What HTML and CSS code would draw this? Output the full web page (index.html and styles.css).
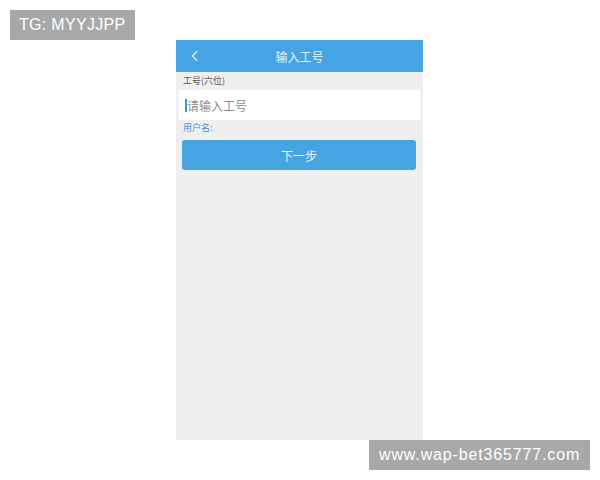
FILE: index.html
```html
<!DOCTYPE html>
<html>
<head>
<meta charset="utf-8">
<link rel="stylesheet" href="styles.css">
</head>
<body>
<div class="stage">
  <div class="tag">TG: MYYJJPP</div>
  <div class="phone">
    <div class="header">
      <svg class="back" width="8" height="12" viewBox="0 0 8 12"><path d="M6 1 L1.5 6 L6 11" fill="none" stroke="#d8ecfa" stroke-width="1.4"/></svg>
      <div class="title">输入工号</div>
    </div>
    <div class="label">工号(六位)</div>
    <div class="input"><span class="caret"></span><span class="ph">请输入工号</span></div>
    <div class="label user">用户名:</div>
    <div class="btn">下一步</div>
  </div>
  <div class="wm">www.wap-bet365777.com</div>
</div>
</body>
</html>
```

FILE: styles.css
```css
html, body { margin: 0; padding: 0; background: #fff; }
body { font-family: "Liberation Sans", "Noto Sans CJK SC", sans-serif; width: 600px; height: 480px; overflow: hidden; }
.stage { position: relative; width: 600px; height: 480px; }
.tag {
  position: absolute; left: 10px; top: 10px; width: 125px; height: 30px;
  background: #a8a8a8; color: #fff; font-size: 16px; line-height: 30px;
  padding-left: 9px; box-sizing: border-box; letter-spacing: 0.3px;
}
.phone {
  position: absolute; left: 176px; top: 40px; width: 247px; height: 400px;
  background: #efefef; display: flex; flex-direction: column;
}
.header {
  height: 32px; background: #47a4e2; position: relative;
  display: flex; align-items: center; justify-content: center;
}
.back { position: absolute; left: 15px; top: 10px; }
.title { color: #e8f3fc; font-size: 12px; font-family: "Noto Sans CJK SC", sans-serif; }
.label {
  font-family: "Noto Sans CJK SC", sans-serif; font-size: 9px; color: #555;
  padding-left: 7px; margin-top: 2px; line-height: 14px;
}
.input {
  margin: 2px 3px 0 3px; height: 30px; background: #fff;
  display: flex; align-items: center; padding-left: 6px;
}
.caret { width: 2px; height: 13px; background: #4a8fc5; margin-right: 0; }
.ph { font-family: "Noto Sans CJK SC", sans-serif; font-size: 12px; color: #8d8d8d; }
.label.user { color: #4a93c8; margin-top: 1px; }
.btn {
  margin: 5px 7px 0 6px; height: 30px; background: #47a4e2; border-radius: 3px;
  color: #eaf5fd; font-family: "Noto Sans CJK SC", sans-serif; font-size: 12px;
  display: flex; align-items: center; justify-content: center;
}
.wm {
  position: absolute; left: 369px; top: 440px; width: 221px; height: 30px;
  background: #a8a8a8; color: #fff; font-size: 16px; line-height: 30px;
  padding-left: 10px; box-sizing: border-box; letter-spacing: 0.85px;
}
```
